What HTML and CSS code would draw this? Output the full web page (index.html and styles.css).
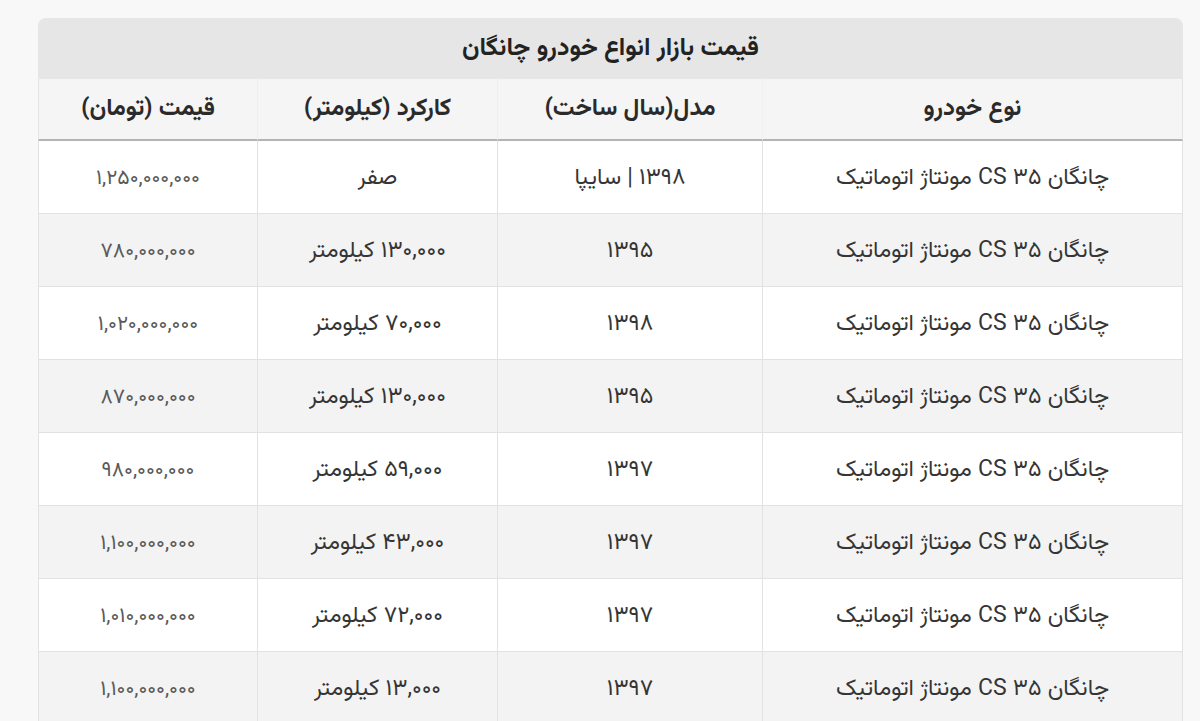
FILE: index.html
```html
<!DOCTYPE html>
<html lang="fa" dir="rtl">
<head>
<meta charset="utf-8">
<title>قیمت بازار انواع خودرو چانگان</title>
<link rel="stylesheet" href="styles.css">
</head>
<body>
<div class="page">
  <table class="price-table">
    <colgroup>
      <col class="c-type">
      <col class="c-model">
      <col class="c-km">
      <col class="c-price">
    </colgroup>
    <thead>
      <tr class="title-row"><th colspan="4">قیمت بازار انواع خودرو چانگان</th></tr>
      <tr class="head-row">
        <th>نوع خودرو</th>
        <th>مدل(سال ساخت)</th>
        <th>کارکرد (کیلومتر)</th>
        <th>قیمت (تومان)</th>
      </tr>
    </thead>
    <tbody>
      <tr><td>چانگان ۳۵ CS مونتاژ اتوماتیک</td><td>۱۳۹۸ | سایپا</td><td>صفر</td><td class="num">۱,۲۵۰,۰۰۰,۰۰۰</td></tr>
      <tr><td>چانگان ۳۵ CS مونتاژ اتوماتیک</td><td>۱۳۹۵</td><td>۱۳۰,۰۰۰ کیلومتر</td><td class="num">۷۸۰,۰۰۰,۰۰۰</td></tr>
      <tr><td>چانگان ۳۵ CS مونتاژ اتوماتیک</td><td>۱۳۹۸</td><td>۷۰,۰۰۰ کیلومتر</td><td class="num">۱,۰۲۰,۰۰۰,۰۰۰</td></tr>
      <tr><td>چانگان ۳۵ CS مونتاژ اتوماتیک</td><td>۱۳۹۵</td><td>۱۳۰,۰۰۰ کیلومتر</td><td class="num">۸۷۰,۰۰۰,۰۰۰</td></tr>
      <tr><td>چانگان ۳۵ CS مونتاژ اتوماتیک</td><td>۱۳۹۷</td><td>۵۹,۰۰۰ کیلومتر</td><td class="num">۹۸۰,۰۰۰,۰۰۰</td></tr>
      <tr><td>چانگان ۳۵ CS مونتاژ اتوماتیک</td><td>۱۳۹۷</td><td>۴۳,۰۰۰ کیلومتر</td><td class="num">۱,۱۰۰,۰۰۰,۰۰۰</td></tr>
      <tr><td>چانگان ۳۵ CS مونتاژ اتوماتیک</td><td>۱۳۹۷</td><td>۷۲,۰۰۰ کیلومتر</td><td class="num">۱,۰۱۰,۰۰۰,۰۰۰</td></tr>
      <tr><td>چانگان ۳۵ CS مونتاژ اتوماتیک</td><td>۱۳۹۷</td><td>۱۳,۰۰۰ کیلومتر</td><td class="num">۱,۱۰۰,۰۰۰,۰۰۰</td></tr>
    </tbody>
  </table>
</div>
</body>
</html>
```
FILE: styles.css
```css
html, body {
  margin: 0;
  padding: 0;
  background: #f8f8f8;
  height: 100%;
  overflow: hidden;
}
body {
  font-family: "Vazirmatn", "Noto Sans Arabic", "DejaVu Sans", sans-serif;
  color: #333;
}
.page {
  padding: 18px 17px 0 38px;
}
.price-table {
  width: 1145px;
  border-collapse: separate;
  border-spacing: 0;
  table-layout: fixed;
}
.c-type { width: 421px; }
.c-model { width: 265px; }
.c-km { width: 240px; }
.c-price { width: 219px; }

.title-row th {
  height: 60px;
  line-height: 1.3;
  background: #e6e6e6;
  border-radius: 8px 8px 0 0;
  font-size: 25px;
  font-weight: bold;
  color: #222;
  text-align: center;
  padding: 1px 0 0;
}
.head-row th {
  height: 58px;
  line-height: 1.3;
  background: #f5f5f5;
  font-size: 24px;
  font-weight: bold;
  color: #2a2a2a;
  text-align: center;
  padding: 2px 0 0;
  border-bottom: 2px solid #b4b4b4;
  border-left: 1px solid #f0f0f0;
}
.head-row th:first-child { border-right: 1px solid #e4e4e4; }
.head-row th:last-child { border-left: 1px solid #e4e4e4; }

tbody td {
  height: 69px;
  line-height: 1.3;
  padding: 3px 0 0;
  text-align: center;
  font-size: 23px;
  color: #353535;
  border-bottom: 1px solid #e2e2e2;
  border-left: 1px solid #e2e2e2;
}
tbody td:first-child { border-right: 1px solid #e2e2e2; }
tbody tr:nth-child(odd) td { background: #ffffff; }
tbody tr:nth-child(even) td { background: #f3f3f3; }
td.num {
  color: #5a5a5a;
  font-size: 21px;
  letter-spacing: 2.5px;
}
```
